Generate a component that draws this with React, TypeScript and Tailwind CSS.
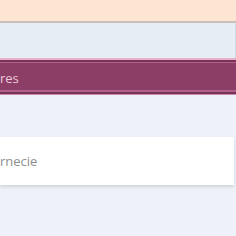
export default function App() {
  return (
    <div className="w-[236px] h-[236px] overflow-hidden bg-[#eef2f8] font-['Open_Sans',sans-serif]">
      <div className="h-[23px] bg-[#fde5d3] border-b-2 border-[#c9c0ba]" />
      <div className="h-[35px] bg-[#e6edf5] border-r border-[#d5dbe3]" />
      <div className="h-[37px] bg-[#8c3e67] border-t-2 border-b border-t-[#e7b0c9] border-b-[#c98aa8] flex flex-col">
        <div className="h-[2px] bg-[#7a3358]" />
        <div className="h-px bg-[#b0618a]" />
        <div className="flex-1 flex items-center pt-[3px] text-[13px] leading-none text-[#ecc9da]">
          <span>res</span>
        </div>
        <div className="h-[2px] bg-[#b0618a]" />
        <div className="h-[2px] bg-[#7a3358]" />
      </div>
      <div className="h-[42px]" />
      <div className="h-[48px] w-[234px] bg-white shadow-[0_2px_3px_rgba(0,0,0,0.12)] flex items-center">
        <span className="pt-px text-[13px] leading-none text-[#8e8e8e]">rnecie</span>
      </div>
    </div>
  );
}
